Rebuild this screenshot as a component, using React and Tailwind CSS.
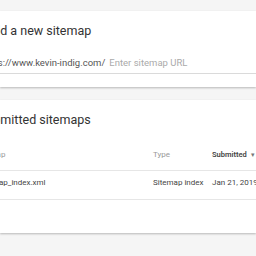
import React from 'react';

const App = () => {
    return (
        <div className="w-[256px] h-[256px] overflow-hidden bg-[#f5f5f5] font-['Roboto',sans-serif] pt-[11px]">
            {/* Add sitemap card */}
            <div className="bg-white h-[76px] shadow-[0_1px_2px_rgba(0,0,0,0.25)] pt-[12px] overflow-hidden">
                <p className="-ml-[15px] text-[12.5px] text-[#333] leading-[16px] whitespace-nowrap">Add a new sitemap</p>
                <div className="mt-[17px] border-b border-[#dadada] pb-[3px] flex items-baseline whitespace-nowrap">
                    <span className="-ml-[19px] shrink-0 text-[9.5px] text-[#555]">https://www.kevin-indig.com/</span>
                    <span className="ml-[4px] shrink-0 text-[9.5px] text-[#aaa]">Enter sitemap URL</span>
                </div>
            </div>

            {/* Submitted sitemaps card */}
            <div className="mt-[13px] bg-white h-[133px] shadow-[0_1px_2px_rgba(0,0,0,0.25)] pt-[12px] overflow-hidden">
                <p className="-ml-[21px] text-[12.5px] text-[#333] leading-[16px] whitespace-nowrap">Submitted sitemaps</p>
                <div className="mt-[16px] h-[27px] pt-[6px] flex items-start border-b border-[#e6e6e6] text-[8px] leading-[10px] whitespace-nowrap">
                    <span className="-ml-[24px] w-[177px] shrink-0 text-[#999]">Sitemap</span>
                    <span className="w-[59px] shrink-0 text-[#999]">Type</span>
                    <span className="shrink-0 font-semibold text-[7.5px] text-[#444]">Submitted</span>
                    <span className="ml-[4px] shrink-0 text-[#777] text-[7px]">▾</span>
                </div>
                <div className="h-[29px] pt-[7px] flex items-start border-b border-[#e6e6e6] text-[8px] leading-[10px] text-[#444] whitespace-nowrap">
                    <span className="-ml-[21px] w-[174px] shrink-0">sitemap_index.xml</span>
                    <span className="w-[59px] shrink-0">Sitemap index</span>
                    <span className="shrink-0">Jan 21, 2019</span>
                </div>
            </div>
        </div>
    );
};

export default App;
